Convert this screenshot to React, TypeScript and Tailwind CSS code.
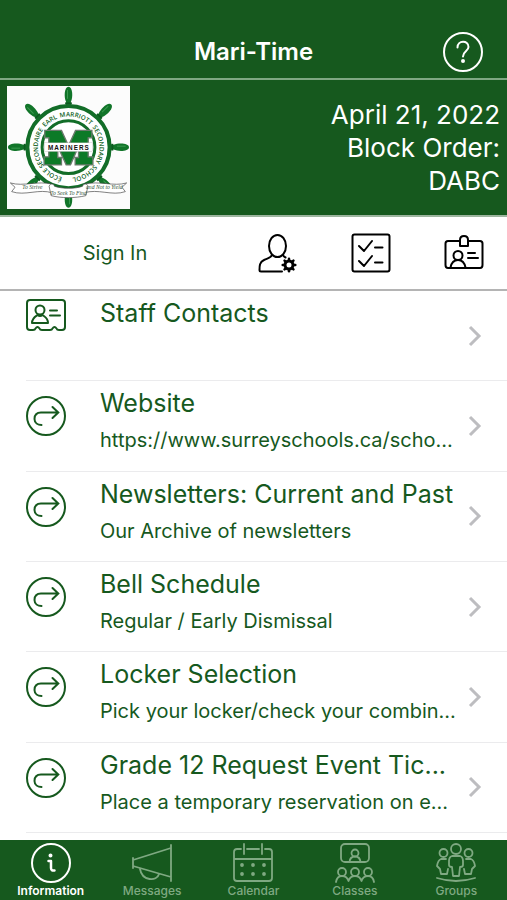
import type { ReactNode } from "react";

const spokes = [0, 45, 90, 135, 180, 225, 270, 315];

const ringWords = [
  { word: "ÉCOLE", offset: "3%" },
  { word: "SECONDAIRE", offset: "14%" },
  { word: "EARL", offset: "36%" },
  { word: "MARRIOTT", offset: "45.5%" },
  { word: "SECONDARY", offset: "64%" },
  { word: "SCHOOL", offset: "85%" },
];

function SchoolLogo() {
  return (
    <svg viewBox="0 0 368 368" className="size-[123px] shrink-0 bg-[#fcfcfc]" role="img" aria-label="Earl Marriott Secondary School, Mariners">
      <defs>
        <path id="ring" d="M 182 275 A 92 92 0 1 1 187 275" />
      </defs>
      {spokes.map((angle) => (
        <g key={angle} transform={`rotate(${angle} 184 183)`}>
          <path d="M174 75 L177 48 C170 34 171 2 184 2 C197 2 198 34 191 48 L194 75 Z" fill="#117529" />
          <path d="M174 52 H194" stroke="#0d5a20" strokeWidth="6" />
          <path d="M181 12 V38" stroke="#3b9a50" strokeWidth="3" />
        </g>
      ))}
      <circle cx="184" cy="183" r="123" fill="#fff" stroke="#126d28" strokeWidth="12" />
      <circle cx="184" cy="183" r="79" fill="#fff" stroke="#126d28" strokeWidth="9" />
      {ringWords.map(({ word, offset }) => (
        <text key={offset} fill="#0f5f24" fontSize="19" fontWeight="600" style={{ fontFamily: "'Open Sans', sans-serif" }}>
          <textPath href="#ring" startOffset={offset}>{word}</textPath>
        </text>
      ))}
      <path
        d="M113 133 H163 L184 179 L205 133 H254 V155 H243 V212 H257 V236 H204 V214 H214 V181 L190 236 H177 L152 181 V214 H163 V236 H111 V212 H125 V155 H113 Z"
        fill="#0c7a27"
        stroke="#6b7a6d"
        strokeWidth="4"
      />
      <rect x="112" y="170" width="144" height="26" fill="#fff" stroke="#aaa" strokeWidth="1" />
      <text x="185" y="190" fill="#111" fontSize="19" fontWeight="700" textAnchor="middle" letterSpacing="3" style={{ fontFamily: "'Liberation Sans', sans-serif" }}>
        MARINERS
      </text>
      <g fill="#fff" stroke="#444" strokeWidth="2">
        <path d="M10 290 C50 302 90 282 136 294 V320 C96 306 54 330 14 316 L24 303 Z" />
        <path d="M358 290 C318 302 278 282 230 294 V320 C272 306 314 330 354 316 L344 303 Z" />
        <path d="M126 300 C130 290 140 292 142 300 C166 308 204 308 226 300 C228 292 240 290 242 300 L236 328 C204 336 162 336 132 328 Z" />
      </g>
      <g fill="#35553b" fontSize="17" fontStyle="italic" textAnchor="middle" style={{ fontFamily: "'Liberation Serif', serif" }}>
        <text x="76" y="309">To Strive</text>
        <text x="184" y="325">To Seek To Find</text>
        <text x="291" y="309">and Not to Yield</text>
      </g>
    </svg>
  );
}

function Icon({ children, className = "size-10", width = 2 }: { children: ReactNode; className?: string; width?: number }) {
  return (
    <svg viewBox="0 0 40 40" className={className} fill="none" stroke="currentColor" strokeWidth={width} strokeLinecap="round" strokeLinejoin="round" aria-hidden="true">
      {children}
    </svg>
  );
}

const HelpIcon = () => (
  <Icon>
    <circle cx="20" cy="20" r="19" />
    <path d="M14.5 15.5 C14.5 8 25.5 8 25.5 15 C25.5 19 20 19 20 24.5" />
    <circle cx="20" cy="29" r="1" fill="currentColor" />
  </Icon>
);

const teeth = [0, 45, 90, 135, 180, 225, 270, 315];

const ProfileIcon = () => (
  <Icon>
    <ellipse cx="19.5" cy="13" rx="8.5" ry="11" />
    <path d="M14 22 C13 25 10 25 6 27 C1.5 29 1.5 33 1.5 37 C1.5 38 2 38.5 3 38.5 H24 M25 22 C25.5 23.5 26.5 24 27.5 24.5" />
    <circle cx="31" cy="32" r="4" strokeWidth="3" />
    {teeth.map((angle) => (
      <path key={angle} d="M31 27 V25.7" strokeWidth="2.5" transform={`rotate(${angle} 31 32)`} />
    ))}
  </Icon>
);

const ChecklistIcon = () => (
  <Icon>
    <rect x="1.5" y="1.5" width="37" height="37" rx="2" />
    <path d="M8 13 L13 18 L21 8 M8 28 L13 33 L21 23 M24 14.5 H31.5 M24 29.5 H31.5" />
  </Icon>
);

const BadgeIcon = () => (
  <Icon>
    <path d="M16 8 H4 Q1.5 8 1.5 10.5 V32 Q1.5 35 4 35 H36 Q38.5 35 38.5 32 V10.5 Q38.5 8 36 8 H24" />
    <path d="M16 13 V7 Q16 3 20 3 Q24 3 24 7 V13 Z" />
    <circle cx="14" cy="22.5" r="4.5" />
    <path d="M6.5 34.5 Q8 27 14 27 Q20 27 21.5 34.5 M24 20 H31 M24 25 H34" />
  </Icon>
);

const ContactCardIcon = () => (
  <Icon>
    <path d="M4 5 H36 Q39 5 39 8 V32 Q39 35 36 35 H33 Q31 35 30.5 33.5 Q28.500 30.500 26.500 33.500 Q26 35 24 35 H16 Q14 35 13.500 33.500 Q11.500 30.500 9.500 33.500 Q9 35 7 35 H4 Q1 35 1 32 V8 Q1 5 4 5 Z" />
    <circle cx="14" cy="15" r="4.5" />
    <path d="M6 28 C6 23 10 21 11.5 20 Q14 22 16.5 20 C19 22 22 23 22 28 Z M24 15.5 H31 M24 20.5 H34" />
  </Icon>
);

const ForwardIcon = () => (
  <Icon>
    <circle cx="20" cy="20" r="19" />
    <path d="M15.5 29 C12 29 8.5 27 8.5 23 C8.5 19 11 16.5 15 16.5 H32 M26.5 11 L32.3 16.5 L26.5 22" strokeLinejoin="miter" />
  </Icon>
);

const InfoIcon = () => (
  <Icon>
    <circle cx="20" cy="20" r="19" />
    <circle cx="19.5" cy="12.5" r="1" fill="currentColor" />
    <path d="M17.5 18 H20 V25 Q20 28 23.5 27.5" strokeWidth="2.5" />
  </Icon>
);

const MegaphoneIcon = () => (
  <Icon width={1.8}>
    <path d="M1 15 V25 M1 17 L39 5 V34 L1 23 M39 2 V38 M8 26 C10 38 25 39 27 31" />
  </Icon>
);

const CalendarIcon = () => (
  <Icon width={1.8}>
    <path d="M8 6 H4 Q1 6 1 9 V35 Q1 38 4 38 H36 Q39 38 39 35 V9 Q39 6 36 6 H32 M14 6 H26 M11 1 V11 M29 1 V11 M1 16 H39" />
    {[22, 31].map((y) => [9, 20, 31].map((x) => <circle key={`${x}-${y}`} cx={x} cy={y} r="1" fill="currentColor" />))}
  </Icon>
);

const ClassesIcon = () => (
  <Icon width={1.8}>
    <rect x="6" y="1" width="28" height="18" rx="4" />
    <circle cx="20" cy="10" r="3.5" />
    <path d="M14.5 19 Q15 13.5 20 13.5 Q25 13.5 25.5 19" />
    {[7, 20, 33].map((x) => (
      <circle key={x} cx={x} cy="29" r="4" />
    ))}
    <path d="M1 39 Q2 33 7 33 Q12 33 13.5 38 Q15 33 20 33 Q25 33 26.5 38 Q28 33 33 33 Q38 33 39 39" />
  </Icon>
);

const GroupsIcon = () => (
  <Icon width={1.8}>
    <circle cx="20" cy="6" r="5" />
    <circle cx="7.5" cy="10" r="4" />
    <circle cx="32.5" cy="10" r="4" />
    <path d="M16 13 H24 Q27 14 27 18 V22 Q27 24 24 24 L23 33 H17 L16 24 Q13 24 13 22 V18 Q13 14 16 13 Z" />
    <path d="M10 16 H5 Q2 17 1 23 L4 26 L5 31 H11 L12 26 M30 16 H35 Q38 17 39 23 L36 26 L35 31 H29 L28 26" />
    <path d="M1 35 Q20 41 39 35" />
  </Icon>
);

type Row = { title: string; detail?: string; icon: ReactNode };

const rows: Row[] = [
  { title: "Staff Contacts", icon: <ContactCardIcon /> },
  { title: "Website", detail: "https://www.surreyschools.ca/scho...", icon: <ForwardIcon /> },
  { title: "Newsletters: Current and Past", detail: "Our Archive of newsletters", icon: <ForwardIcon /> },
  { title: "Bell Schedule", detail: "Regular / Early Dismissal", icon: <ForwardIcon /> },
  { title: "Locker Selection", detail: "Pick your locker/check your combin...", icon: <ForwardIcon /> },
  { title: "Grade 12 Request Event Tic...", detail: "Place a temporary reservation on e...", icon: <ForwardIcon /> },
];

const tabs = [
  { label: "Information", icon: <InfoIcon /> },
  { label: "Messages", icon: <MegaphoneIcon /> },
  { label: "Calendar", icon: <CalendarIcon /> },
  { label: "Classes", icon: <ClassesIcon /> },
  { label: "Groups", icon: <GroupsIcon /> },
];

export default function App() {
  return (
    <div className="flex min-h-screen flex-col bg-white font-['Inter',sans-serif] text-[#16591e]">
      <header className="bg-[#16591e] text-white">
        <div className="grid h-20 grid-cols-[1fr_auto_1fr] items-end border-b-2 border-[#7fa883] px-6 pb-[6px]">
          <h1 className="col-start-2 pb-1 text-2xl leading-8 font-semibold">Mari-Time</h1>
          <button type="button" aria-label="Help" className="justify-self-end">
            <HelpIcon />
          </button>
        </div>
        <div className="flex items-center justify-between border-b-2 border-[#9db59f] px-[7px] py-[6px]">
          <SchoolLogo />
          <p className="text-right text-[26px] leading-[33px]">
            April 21, 2022
            <br />
            Block Order:
            <br />
            DABC
          </p>
        </div>
      </header>

      <div className="flex h-[74px] items-center border-b-2 border-[#b4b4b4] pr-[23px]">
        <div className="flex flex-1 justify-center pr-7">
          <button type="button" className="text-xl leading-7">Sign In</button>
        </div>
        <div className="flex gap-[53px] text-black">
          <button type="button" aria-label="Profile settings"><ProfileIcon /></button>
          <button type="button" aria-label="Checklist"><ChecklistIcon /></button>
          <button type="button" aria-label="Student card"><BadgeIcon /></button>
        </div>
      </div>

      <main className="flex flex-1 flex-col pb-[7px]">
        <ul className="grid flex-1 auto-rows-fr pl-[26px]">
          {rows.map((row, index) => (
            <li key={row.title} className="border-b border-[#ebebed]">
              <a href="#" className="flex h-full w-full pr-6">
                <span className={index === 0 ? "mt-1 w-[74px] shrink-0" : "mt-[15px] w-[74px] shrink-0"}>{row.icon}</span>
                <span className="min-w-0 flex-1 pt-[6px] whitespace-nowrap">
                  <span className="block text-[25px] leading-8">{row.title}</span>
                  {row.detail && <span className="mt-[7px] block text-xl leading-7">{row.detail}</span>}
                </span>
                <svg viewBox="0 0 16 22" className="h-[22px] w-4 shrink-0 self-center" fill="none" stroke="#bdbdc0" strokeWidth="3" aria-hidden="true">
                  <path d="M3 2 L12 11 L3 20" />
                </svg>
              </a>
            </li>
          ))}
        </ul>
      </main>

      <nav className="grid h-[60px] grid-cols-5 bg-[#16591e]">
        {tabs.map((tab, index) => (
          <button
            key={tab.label}
            type="button"
            aria-current={index === 0 ? "page" : undefined}
            className={index === 0 ? "flex flex-col items-center pt-[3px] text-white" : "flex flex-col items-center pt-[3px] text-[#7fa982]"}
          >
            {tab.icon}
            <span className={index === 0 ? "text-xs leading-4 font-semibold" : "text-xs leading-4 font-medium"}>{tab.label}</span>
          </button>
        ))}
      </nav>
    </div>
  );
}
